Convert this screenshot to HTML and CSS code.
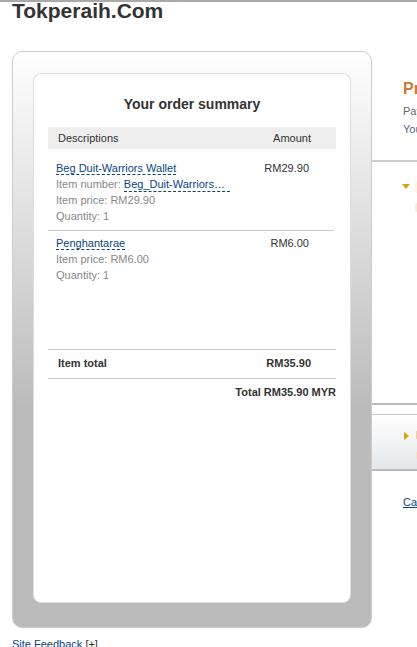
FILE: index.html
```html
<!DOCTYPE html>
<html>

<head>
    <meta charset="utf-8">
    <title>Tokperaih.Com - Checkout</title>
    <meta name="viewport" content="width=device-width">
    <link rel="stylesheet" href="styles.css">
</head>

<body>
    <div class="page">
        <h1 class="shop-name">Tokperaih.Com</h1>

        <div class="checkout">
            <div class="cart-panel">
                <div class="cart">
                    <h2>Your order summary</h2>
                    <div class="cart-head"><span>Descriptions</span><span>Amount</span></div>

                    <div class="cart-items">
                        <div class="item">
                            <div class="item-desc">
                                <a class="item-name" href="#">Beg Duit-Warriors Wallet</a>
                                <div class="item-meta">Item number: <a class="item-num" href="#">Beg_Duit-Warriors_Wallet</a></div>
                                <div class="item-meta">Item price: RM29.90</div>
                                <div class="item-meta">Quantity: 1</div>
                            </div>
                            <div class="item-amt">RM29.90</div>
                        </div>
                        <div class="item">
                            <div class="item-desc">
                                <a class="item-name" href="#">Penghantarae</a>
                                <div class="item-meta">Item price: RM6.00</div>
                                <div class="item-meta">Quantity: 1</div>
                            </div>
                            <div class="item-amt">RM6.00</div>
                        </div>
                    </div>

                    <div class="cart-subtotal"><span>Item total</span><span>RM35.90</span></div>
                    <div class="cart-total">Total RM35.90 MYR</div>
                </div>
            </div>

            <div class="pay-col">
                <div class="pay-intro">
                    <h3>Proceed to payment</h3>
                    <p class="muted">Pay with PayPal, your credit or debit card</p>
                    <p class="note">You don't need a PayPal account</p>
                </div>
                <div class="pay-login">
                    <div class="toggle">
                        <span class="arrow-down"></span>
                        <span class="hint-stack">
                            <span class="hint"></span>
                            <span class="hint hint-low"></span>
                        </span>
                    </div>
                </div>
                <div class="pay-card">
                    <div class="toggle">
                        <span class="arrow-right"></span>
                        <span class="hint-stack">
                            <span class="hint hint-gold"></span>
                            <span class="hint hint-low2"></span>
                        </span>
                    </div>
                </div>
                <div class="pay-cancel"><a href="#">Cancel and return to Tokperaih.Com</a></div>
            </div>
        </div>

        <div class="feedback"><a href="#">Site Feedback</a> [+]</div>
    </div>
</body>

</html>
```

FILE: styles.css
```css
html,
body {
    overflow: hidden;
}

body {
    margin: 0;
    color: #333;
    background-color: white;
    font-family: "Liberation Sans", Arial, sans-serif;
    font-size: 11px;
}

a {
    color: #084482;
}

.page {
    border-top: 2px solid #a9a9a9;
}

.shop-name {
    margin: 0 0 32px 12px;
    font-size: 21px;
    line-height: 17px;
    color: #333;
}

.checkout {
    display: flex;
    margin-left: 12px;
}

/* left: order summary */

.cart-panel {
    flex: none;
    box-sizing: border-box;
    width: 360px;
    height: 577px;
    padding: 21px 20px 24px 20px;
    border: 1px solid #ccc;
    border-radius: 10px;
    background: linear-gradient(#fff, #bbb 62%);
}

.cart {
    box-sizing: border-box;
    height: 530px;
    padding: 0 14px;
    border: 1px solid #ddd;
    border-radius: 8px;
    background-color: white;
}

.cart h2 {
    margin: 21px 0 14px;
    font-size: 14px;
    line-height: 18px;
    text-align: center;
    color: #333;
}

.cart-head {
    display: flex;
    justify-content: space-between;
    height: 22px;
    padding: 0 25px 0 10px;
    line-height: 22px;
    background-color: #eee;
}

.cart-items {
    height: 200px;
}

.item {
    display: flex;
    justify-content: space-between;
    margin-right: 2px;
    padding: 4px 25px 6px 8px;
    line-height: 16px;
    border-bottom: 1px solid #ccc;
}

.item:first-child {
    padding-top: 11px;
}

.item:last-child {
    border-bottom: none;
}

.item-name {
    text-decoration: none;
    border-bottom: 1px dashed #084482;
}

.item-meta {
    color: #888;
}

.item-num {
    display: inline-block;
    vertical-align: top;
    max-width: 106px;
    margin-top: 1px;
    line-height: 14px;
    overflow: hidden;
    white-space: nowrap;
    text-overflow: ellipsis;
    text-decoration: none;
    border-bottom: 1px dashed #084482;
}

.cart-subtotal {
    display: flex;
    justify-content: space-between;
    padding: 5px 25px 7px 10px;
    line-height: 16px;
    font-weight: bold;
    border-top: 1px solid #ccc;
    border-bottom: 1px solid #ccc;
}

.cart-total {
    padding-top: 5px;
    line-height: 16px;
    font-weight: bold;
    text-align: right;
}

/* right: payment options */

.pay-col {
    flex: none;
    width: 380px;
}

.pay-intro {
    padding: 28px 0 22px 31px;
}

.pay-intro h3 {
    margin: 0 0 3px;
    font-size: 16px;
    line-height: 20px;
    color: #c67b30;
    white-space: nowrap;
}

.pay-intro p {
    margin: 0;
    line-height: 18px;
    white-space: nowrap;
}

.muted {
    color: #666;
}

.note {
    color: #52698a;
}

.pay-login {
    height: 221px;
    padding: 20px 0 0 30px;
    border-top: 2px solid #ccc;
    border-bottom: 2px solid #bbb;
}

.pay-card {
    height: 37px;
    margin-top: 9px;
    padding: 17px 0 0 32px;
    border-top: 1px solid #ccc;
    border-bottom: 2px solid #bbb;
    background: linear-gradient(#fff, #e3e7eb);
}

.toggle {
    display: flex;
    align-items: flex-start;
}

.arrow-down {
    width: 0;
    height: 0;
    margin-top: 2px;
    border-left: 4.5px solid transparent;
    border-right: 4.5px solid transparent;
    border-top: 5px solid #d4a50a;
}

.arrow-right {
    width: 0;
    height: 0;
    border-top: 4.5px solid transparent;
    border-bottom: 4.5px solid transparent;
    border-left: 5px solid #d4a50a;
}

.hint-stack {
    display: flex;
    flex-direction: column;
    margin-left: 5px;
}

.pay-card .hint-stack {
    margin-left: 7px;
    margin-top: -1px;
}

.hint {
    display: block;
    width: 80px;
    height: 11px;
    background-color: #fff5dc;
}

.hint-low {
    height: 9px;
    margin-top: 10px;
    background-color: #fdeecb;
}

.hint-gold {
    height: 8px;
    background-color: #f3d48c;
}

.hint-low2 {
    height: 7px;
    margin-top: 13px;
    background-color: #fbe3b2;
}

.pay-cancel {
    padding: 24px 0 0 31px;
    line-height: 14px;
    white-space: nowrap;
}

.feedback {
    margin: 9px 0 0 12px;
    line-height: 14px;
}

.feedback a {
    text-decoration: none;
}
```
